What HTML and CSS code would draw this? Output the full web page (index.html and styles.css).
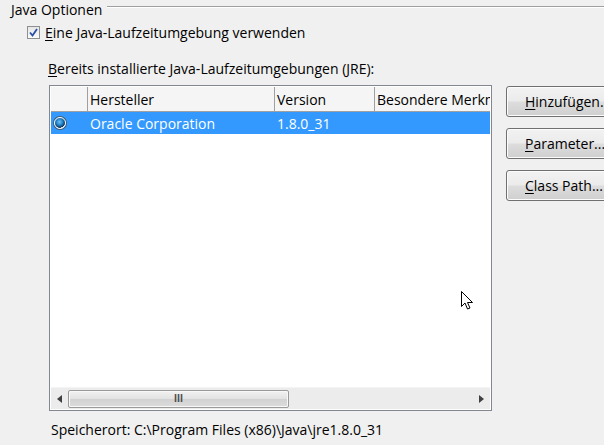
FILE: index.html
```html
<!DOCTYPE html>
<html lang="de">
<head>
<meta charset="utf-8">
<title>Java Optionen</title>
<link rel="stylesheet" href="styles.css">
</head>
<body>
<div class="panel">
  <div class="group-title">
    <span class="legend">Java Optionen</span>
    <span class="rule"></span>
  </div>

  <label class="check-row">
    <span class="checkbox">
      <svg width="9" height="9" viewBox="0 0 9 9"><path d="M1 4.5 L3.5 7.5 L8 1" fill="none" stroke="#2a4fa8" stroke-width="1.8"/></svg>
    </span>
    <span><u>E</u>ine Java-Laufzeitumgebung verwenden</span>
  </label>

  <div class="list-label"><u>B</u>ereits installierte Java-Laufzeitumgebungen (JRE):</div>

  <div class="main">
    <div class="table">
      <div class="grid">
        <div class="row head">
          <div class="cell c0"></div>
          <div class="cell c1">Hersteller</div>
          <div class="cell c2">Version</div>
          <div class="cell c3">Besondere Merkmale</div>
        </div>
        <div class="row selected">
          <div class="cell c0"><span class="radio"></span></div>
          <div class="cell c1">Oracle Corporation</div>
          <div class="cell c2">1.8.0_31</div>
          <div class="cell c3"></div>
        </div>
      </div>
      <div class="hscroll">
        <span class="arrow">
          <svg width="5" height="8" viewBox="0 0 5 8"><path d="M5 0 L0 4 L5 8 Z" fill="#404040"/></svg>
        </span>
        <div class="track">
          <div class="thumb"><span class="grip">III</span></div>
        </div>
        <span class="arrow">
          <svg width="5" height="8" viewBox="0 0 5 8"><path d="M0 0 L5 4 L0 8 Z" fill="#404040"/></svg>
        </span>
      </div>
    </div>

    <div class="buttons">
      <button class="btn"><u>H</u>inzufügen...</button>
      <button class="btn"><u>P</u>arameter...</button>
      <button class="btn"><u>C</u>lass Path...</button>
    </div>
  </div>

  <div class="location">Speicherort: C:\Program Files (x86)\Java\jre1.8.0_31</div>

  <svg class="cursor" width="13" height="20" viewBox="0 0 13 20">
    <path d="M0.5 0.5 L0.5 15.5 L4 12 L6.5 18 L9 17 L6.5 11.5 L11.5 11.5 Z" fill="#fff" stroke="#000" stroke-width="1" stroke-linejoin="round"/>
  </svg>
</div>
</body>
</html>
```

FILE: styles.css
```css
html, body {
  margin: 0;
  padding: 0;
  width: 604px;
  height: 445px;
  overflow: hidden;
  background: #f0f0f0;
}

body {
  font-family: "Open Sans", "Noto Sans", sans-serif;
  font-size: 14px;
  color: #000;
}

u {
  text-decoration: underline;
  text-underline-offset: 2px;
}

.panel {
  position: relative;
  height: 445px;
}

.group-title {
  display: flex;
  align-items: center;
  padding-left: 11px;
  height: 17px;
}

.legend {
  line-height: 17px;
  padding-top: 1px;
}

.rule {
  flex: 1;
  height: 0;
  border-top: 1px solid #a0a0a0;
  border-bottom: 1px solid #fff;
  margin-left: 5px;
  margin-top: -3px;
}

.check-row {
  display: flex;
  align-items: center;
  gap: 5px;
  padding-left: 27px;
  margin-top: 9px;
  height: 13px;
}

.checkbox {
  width: 11px;
  height: 11px;
  border: 1px solid #8e8f8f;
  background: linear-gradient(#e6e6e6, #fafafa);
  display: flex;
  align-items: center;
  justify-content: center;
  box-sizing: content-box;
}

.list-label {
  padding-left: 48px;
  margin-top: 22px;
  line-height: 16px;
}

.main {
  display: flex;
  gap: 14px;
  padding-left: 49px;
  margin-top: 8px;
}

.table {
  width: 439px;
  height: 322px;
  border: 1px solid #828790;
  background: #fff;
  display: flex;
  flex-direction: column;
  padding: 1px;
}

.grid {
  flex: 1;
}

.row {
  display: flex;
  height: 22px;
}

.row.head {
  height: 24px;
  background: #f5f5f5;
  border-bottom: 1px solid #a0a0a0;
}

.cell {
  display: flex;
  align-items: center;
  padding-left: 2px;
  white-space: nowrap;
  overflow: hidden;
  box-sizing: border-box;
}

.head .cell {
  border-right: 1px solid #a0a0a0;
}

.head .c3 {
  border-right: none;
}

.c0 { width: 37px; padding-left: 3px; }
.c1 { width: 187px; }
.c2 { width: 100px; }
.c3 { flex: 1; }

.row.selected {
  background: #3399ff;
  color: #fff;
}

.radio {
  width: 10px;
  height: 10px;
  border-radius: 50%;
  border: 1px solid #fff;
  background: radial-gradient(circle at 45% 40%, #6fc4ff 0, #1f7fc4 40%, #0a2f50 70%, #bfcbd6 72%);
  box-shadow: 0 0 0 1px #4a5a66;
}

.hscroll {
  height: 21px;
  display: flex;
  align-items: center;
  background: #ececec;
  border-top: 1px solid #f4f4f4;
}

.arrow {
  width: 17px;
  display: flex;
  justify-content: center;
  align-items: center;
}

.track {
  flex: 1;
  height: 100%;
  display: flex;
  align-items: center;
}

.thumb {
  width: 221px;
  height: 18px;
  border: 1px solid #9a9a9a;
  border-radius: 2px;
  background: linear-gradient(#f2f2f2, #e2e2e2 50%, #d2d2d2 51%, #dcdcdc);
  box-shadow: inset 0 0 0 1px #f8f8f8;
  display: flex;
  align-items: center;
  justify-content: center;
  box-sizing: border-box;
}

.grip {
  font-family: "DejaVu Sans", sans-serif;
  font-size: 8px;
  color: #505050;
  transform: scaleY(1.2);
  font-weight: bold;
}

.buttons {
  display: flex;
  flex-direction: column;
  gap: 11px;
  padding-top: 1px;
}

.btn {
  width: 106px;
  height: 31px;
  font: inherit;
  text-align: left;
  padding: 0 0 0 18px;
  border: 1px solid #707070;
  border-radius: 3px;
  background: linear-gradient(#f2f2f2 0, #ebebeb 48%, #dddddd 52%, #cfcfcf 100%);
  box-shadow: inset 0 0 0 1px #fcfcfc;
  color: #000;
  white-space: nowrap;
}

.location {
  padding-left: 51px;
  margin-top: 10px;
  line-height: 18px;
}

.cursor {
  position: absolute;
  left: 461px;
  top: 291px;
}
```
